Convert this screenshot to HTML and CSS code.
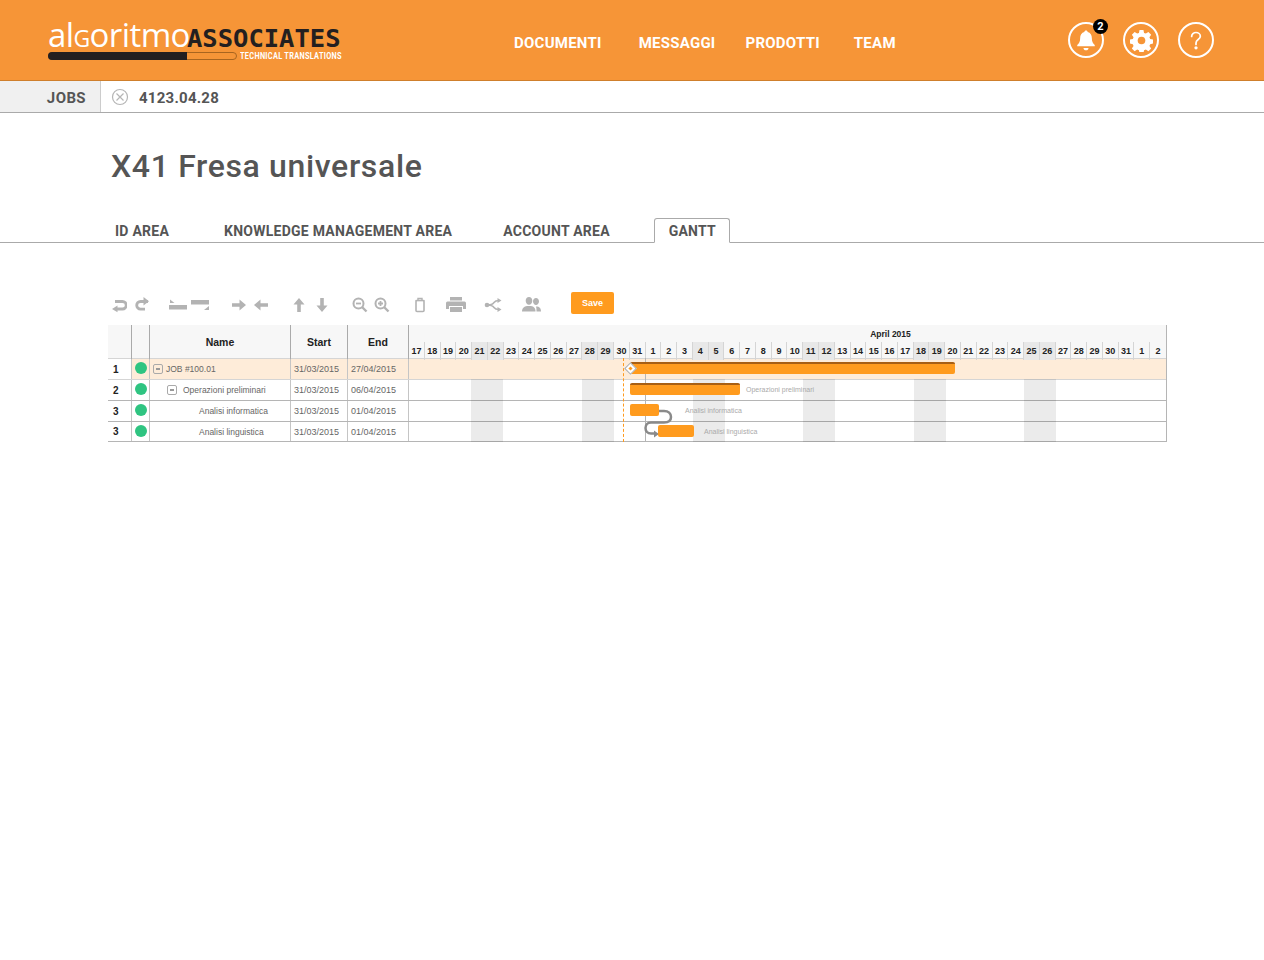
FILE: index.html
```html
<!DOCTYPE html>
<html>
	<head>
		<meta charset="UTF-8" />
		<title>X41 Fresa universale</title>
		<link rel="stylesheet" href="styles.css">
	</head>
	<body>
		<header class="topbar">
			<div class="logo">
				<div class="logo-words">
					<span class="logo-algo">al<span class="logo-g">g</span>oritmo</span><span class="logo-assoc">ASSOCIATES</span>
				</div>
				<div class="logo-under">
					<div class="logo-bar"><div class="logo-fill"></div></div>
					<span class="logo-sub">TECHNICAL TRANSLATIONS</span>
				</div>
			</div>
			<nav class="mainnav">
				<a class="nav-doc">DOCUMENTI</a>
				<a class="nav-msg">MESSAGGI</a>
				<a class="nav-prod">PRODOTTI</a>
				<a class="nav-team">TEAM</a>
			</nav>
			<div class="top-icons">
				<div class="round-icon">
					<svg width="20" height="23" viewBox="0 0 24 27"><path d="M12 1.500c1.200 0 2 .8 2 1.900 3.400.9 5 3.700 5 7.100 0 4.500 1.300 6.500 3.500 8.500v1.500h-21V19c2.200-2 3.500-4 3.500-8.500 0-3.400 1.600-6.200 5-7.100 0-1.100.8-1.900 2-1.900z" fill="#fff"/><path d="M9 22.500h6c0 1.600-1.300 2.800-3 2.800s-3-1.200-3-2.800z" fill="#fff"/></svg>
					<span class="badge">2</span>
				</div>
				<div class="round-icon">
					<svg width="23" height="23" viewBox="0 0 26 26"><path d="M10.800 1h4.400l.7 3.400 2 .8 2.900-1.900 3.100 3.100-1.900 2.900.8 2 3.400.7v4.400l-3.400.7-.8 2 1.900 2.900-3.100 3.100-2.900-1.900-2 .8-.7 3.400h-4.400l-.7-3.400-2-.8-2.900 1.900-3.100-3.100 1.900-2.900-.8-2-3.400-.7v-4.400l3.400-.7.8-2-1.900-2.900 3.100-3.100 2.900 1.900 2-.8z" fill="#fff"/><circle cx="13" cy="13" r="4.300" fill="#f69537"/></svg>
				</div>
				<div class="round-icon">
					<svg width="12" height="19" viewBox="0 0 18 28"><path d="M2.500 8c0-3.500 3-6 6.500-6s6.500 2.400 6.500 5.600c0 2.400-1.300 3.700-3.200 5-1.900 1.400-3.300 2.600-3.300 5v2.400" fill="none" stroke="#fff" stroke-width="2.600" stroke-linecap="round"/><circle cx="9" cy="25" r="2.500" fill="#fff"/></svg>
				</div>
			</div>
		</header>

		<div class="crumbs">
			<div class="crumb-head">JOBS</div>
			<svg class="crumb-x" width="18" height="18" viewBox="0 0 18 18"><circle cx="9" cy="9" r="7.500" fill="none" stroke="#b5b5b5" stroke-width="1.200"/><path d="M5.500 5.500l7 7M12.500 5.500l-7 7" stroke="#b5b5b5" stroke-width="1.200"/></svg>
			<div class="crumb-job">4123.04.28</div>
		</div>

		<h1 class="page-title">X41 Fresa universale</h1>

		<div class="tabs">
			<a class="tab tab-id">ID AREA</a>
			<a class="tab tab-km">KNOWLEDGE MANAGEMENT AREA</a>
			<a class="tab tab-acc">ACCOUNT AREA</a>
			<a class="tab tab-active">GANTT</a>
		</div>

		<div class="toolbar">
			<svg class="tool t-undo" width="16" height="16" viewBox="0 0 16 16"><path d="M3 3.500h7.500a3.500 3.500 0 0 1 0 7.500H5" fill="none" stroke="#b3b3b3" stroke-width="2.800" transform="translate(1 1)"/><path d="M6.500 8.500v6.800L1 12z" fill="#b3b3b3"/></svg>
			<svg class="tool t-redo" width="16" height="16" viewBox="0 0 16 16"><path d="M14 4.500H6.500a3.800 3.800 0 0 0 0 7.600H11" fill="none" stroke="#b3b3b3" stroke-width="2.800"/><path d="M9.500 0v8.500L15 4.300z" fill="#b3b3b3"/></svg>
			<svg class="tool t-out" width="20" height="14" viewBox="0 0 20 14"><rect x="1" y="7" width="18" height="4.500" fill="#b3b3b3"/><path d="M2 1.500l4.500 3.500H2z" fill="#b3b3b3"/></svg>
			<svg class="tool t-in" width="20" height="14" viewBox="0 0 20 14"><rect x="1" y="2" width="18" height="4.500" fill="#b3b3b3"/><path d="M14 12h5V8z" fill="#b3b3b3"/></svg>
			<svg class="tool t-right" width="16" height="14" viewBox="0 0 16 14"><path d="M1 5.200h7.500V1.500L15 7l-6.500 5.500V8.800H1z" fill="#b3b3b3"/></svg>
			<svg class="tool t-left" width="16" height="14" viewBox="0 0 16 14"><path d="M15 5.200H7.500V1.500L1 7l6.500 5.500V8.800H15z" fill="#b3b3b3"/></svg>
			<svg class="tool t-up" width="14" height="16" viewBox="0 0 14 16"><path d="M5.200 15V7.500H1.500L7 1l5.500 6.500H8.800V15z" fill="#b3b3b3"/></svg>
			<svg class="tool t-down" width="14" height="16" viewBox="0 0 14 16"><path d="M5.200 1v7.500H1.500L7 15l5.500-6.500H8.800V1z" fill="#b3b3b3"/></svg>
			<svg class="tool t-zout" width="16" height="16" viewBox="0 0 16 16"><circle cx="6.500" cy="6.500" r="5" fill="none" stroke="#b3b3b3" stroke-width="2"/><path d="M4 6.500h5" stroke="#b3b3b3" stroke-width="1.800"/><path d="M10 10l4.500 4.500" stroke="#b3b3b3" stroke-width="2.400"/></svg>
			<svg class="tool t-zin" width="16" height="16" viewBox="0 0 16 16"><circle cx="6.500" cy="6.500" r="5" fill="none" stroke="#b3b3b3" stroke-width="2"/><path d="M4 6.500h5M6.500 4v5" stroke="#b3b3b3" stroke-width="1.800"/><path d="M10 10l4.500 4.500" stroke="#b3b3b3" stroke-width="2.400"/></svg>
			<svg class="tool t-trash" width="12" height="16" viewBox="0 0 12 16"><rect x="2" y="3.500" width="8" height="11" rx="1" fill="none" stroke="#b3b3b3" stroke-width="1.600"/><path d="M4 4V1.500h4V4" fill="none" stroke="#b3b3b3" stroke-width="1.400"/><path d="M1.500 3.500h9" stroke="#b3b3b3" stroke-width="1.200"/></svg>
			<svg class="tool t-print" width="20" height="16" viewBox="0 0 20 16"><path d="M4 0h12v3.500H4z" fill="#b3b3b3"/><path d="M1.500 4.500h17a1.500 1.500 0 0 1 1.500 1.500v6h-3V9H3v3H0V6a1.500 1.500 0 0 1 1.500-1.500z" fill="#b3b3b3"/><path d="M4 10h12v5H4z" fill="#b3b3b3"/></svg>
			<svg class="tool t-link" width="18" height="14" viewBox="0 0 18 14"><path d="M3 7c4 0 6-1 7-2.500S12 2.500 15 2.500M3 7c4 0 6 1 7 2.500s2 2 5 2" fill="none" stroke="#b3b3b3" stroke-width="1.500"/><circle cx="3" cy="7" r="2.300" fill="#b3b3b3"/><path d="M13.500 0l4 2.500-4 2.500zM13.500 9l4 2.500-4 2.500z" fill="#b3b3b3"/></svg>
			<svg class="tool t-people" width="19" height="15" viewBox="0 0 19 15"><path d="M7 0c2 0 3.300 1.500 3.300 3.800S9 7.800 7 7.800 3.700 6.100 3.700 3.800 5 0 7 0zM14 1c1.700 0 3 1.400 3 3.300S15.700 8 14 8s-3-1.800-3-3.700S12.300 1 14 1z" fill="#b3b3b3"/><path d="M0 14.500c0-3.500 2-5.500 7-5.500s6.500 2 6.500 5.500z" fill="#b3b3b3"/><path d="M14.500 14.500h4.500c0-3-1.200-5-5-5 .5 1.500.5 3.500.5 5z" fill="#b3b3b3"/></svg>
			<button class="save-btn" type="button">Save</button>
		</div>

		<div class="gantt">
			<div class="gantt-head">
				<div class="hcell"></div>
				<div class="hcell"></div>
				<div class="hcell hname">Name</div>
				<div class="hcell hname">Start</div>
				<div class="hcell hname">End</div>
				<div class="hcal">
					<div class="hmonth">April 2015</div>
					<div class="hdays">
						<span>17</span><span>18</span><span>19</span><span>20</span><span class="we">21</span><span class="we">22</span><span>23</span><span>24</span><span>25</span><span>26</span><span>27</span><span class="we">28</span><span class="we">29</span><span>30</span><span>31</span><span>1</span><span>2</span><span>3</span><span class="we">4</span><span class="we">5</span><span>6</span><span>7</span><span>8</span><span>9</span><span>10</span><span class="we">11</span><span class="we">12</span><span>13</span><span>14</span><span>15</span><span>16</span><span>17</span><span class="we">18</span><span class="we">19</span><span>20</span><span>21</span><span>22</span><span>23</span><span>24</span><span class="we">25</span><span class="we">26</span><span>27</span><span>28</span><span>29</span><span>30</span><span>31</span><span>1</span><span>2</span>
					</div>
				</div>
			</div>

			<div class="grow grow-job">
				<div class="cell cell-num">1</div>
				<div class="cell cell-dot"><i class="dot"></i></div>
				<div class="cell cell-name lvl0"><i class="minus"></i>JOB #100.01</div>
				<div class="cell cell-date">31/03/2015</div>
				<div class="cell cell-date">27/04/2015</div>
				<div class="cell"></div>
			</div>
			<div class="grow">
				<div class="cell cell-num">2</div>
				<div class="cell cell-dot"><i class="dot"></i></div>
				<div class="cell cell-name lvl1"><i class="minus"></i>Operazioni preliminari</div>
				<div class="cell cell-date">31/03/2015</div>
				<div class="cell cell-date">06/04/2015</div>
				<div class="cell"></div>
			</div>
			<div class="grow">
				<div class="cell cell-num">3</div>
				<div class="cell cell-dot"><i class="dot"></i></div>
				<div class="cell cell-name lvl2">Analisi informatica</div>
				<div class="cell cell-date">31/03/2015</div>
				<div class="cell cell-date">01/04/2015</div>
				<div class="cell"></div>
			</div>
			<div class="grow grow-last">
				<div class="cell cell-num">3</div>
				<div class="cell cell-dot"><i class="dot"></i></div>
				<div class="cell cell-name lvl2">Analisi linguistica</div>
				<div class="cell cell-date">31/03/2015</div>
				<div class="cell cell-date">01/04/2015</div>
				<div class="cell"></div>
			</div>

			<div class="chart">
				<div class="stripe s1"></div>
				<div class="stripe s2"></div>
				<div class="stripe s3"></div>
				<div class="stripe s4"></div>
				<div class="stripe s5"></div>
				<div class="stripe s6"></div>
				<div class="vline"></div>
				<div class="dashline"></div>
				<div class="bar bar-job summary"></div>
				<div class="diamond"></div>
				<div class="bar bar-ops summary"></div>
				<span class="bar-label lab-ops">Operazioni preliminari</span>
				<span class="bar-label lab-info">Analisi informatica</span>
				<span class="bar-label lab-ling">Analisi linguistica</span>
				<svg class="connector" width="40" height="40" viewBox="0 0 40 40"><path d="M14 4h6c4.500 0 7 2.500 7 6s-2.500 5.500-7 5.500H7c-3.500 0-5.500 2.500-5.500 5.500s2 5.500 5.500 5.500h5" fill="none" stroke="#8a8a8a" stroke-width="2.500"/><path d="M10 23.500l5 3.500-5 3.500z" fill="#8a8a8a"/></svg>
				<div class="bar bar-info"></div>
				<div class="bar bar-ling"></div>
			</div>
		</div>
	</body>
</html>
```

FILE: styles.css
```css
body {
	margin: 0;
	background: #fff;
	font-family: Roboto, "Liberation Sans", sans-serif;
	color: #555;
}

/* top bar */
.topbar {
	display: flex;
	align-items: center;
	height: 80px;
	background-color: #f69537;
	border-bottom: 1px solid #cf7f2c;
	position: relative;
}
.logo {
	margin-left: 48px;
	width: 294px;
	flex: none;
}
.logo-words {
	display: flex;
	align-items: flex-end;
	height: 28px;
	margin-top: 1px;
}
.logo-algo {
	font-family: "Open Sans", sans-serif;
	font-weight: 400;
	font-size: 33px;
	line-height: 28px;
	color: #fff;
	width: 139px;
	letter-spacing: -0.6px;
	flex: none;
}
.logo-g {
	font-variant: small-caps;
}
.logo-assoc {
	font-family: "DejaVu Sans Mono", monospace;
	font-weight: 700;
	font-size: 25.5px;
	line-height: 22px;
	color: #231f20;
}
.logo-under {
	display: flex;
	align-items: center;
	margin-top: 2px;
}
.logo-bar {
	box-sizing: border-box;
	flex: none;
	width: 189px;
	height: 8px;
	border: 1px solid #a8651f;
	border-radius: 4px;
}
.logo-fill {
	width: 139px;
	height: 8px;
	margin: -1px;
	background: #231f20;
	border-radius: 4px 0 0 4px;
}
.logo-sub {
	margin-left: 3px;
	margin-top: -1px;
	font-size: 9.8px;
	font-weight: 700;
	letter-spacing: 0.4px;
	color: #fff;
	white-space: nowrap;
	transform: scaleX(0.75);
	transform-origin: left center;
}
.mainnav {
	display: flex;
	margin-left: 172px;
	margin-top: 5px;
	font-size: 15px;
	font-weight: 700;
	letter-spacing: 0.25px;
	color: #fff;
}
.nav-msg {
	margin-left: 37px;
}
.nav-prod {
	margin-left: 30px;
}
.nav-team {
	margin-left: 34px;
}
.top-icons {
	display: flex;
	gap: 19px;
	margin-left: auto;
	margin-right: 50px;
}
.round-icon {
	box-sizing: border-box;
	width: 36px;
	height: 36px;
	border: 2px solid #fff;
	border-radius: 50%;
	display: flex;
	align-items: center;
	justify-content: center;
	position: relative;
}
.badge {
	position: absolute;
	top: -5px;
	right: -6px;
	width: 15px;
	height: 15px;
	border-radius: 50%;
	background: #000;
	color: #fff;
	font-size: 11px;
	font-weight: 700;
	line-height: 15px;
	text-align: center;
}

/* breadcrumb strip */
.crumbs {
	display: flex;
	align-items: center;
	height: 31px;
	border-bottom: 1px solid #aaa;
}
.crumb-head {
	box-sizing: border-box;
	width: 101px;
	height: 31px;
	line-height: 34px;
	padding-right: 14px;
	text-align: right;
	background: #f0f0f0;
	border-right: 1px solid #ccc;
	font-size: 15px;
	font-weight: 700;
	letter-spacing: 0.4px;
}
.crumb-x {
	margin-left: 10px;
}
.crumb-job {
	margin-left: 10px;
	margin-top: 2px;
	font-size: 15px;
	font-weight: 700;
	letter-spacing: 0.25px;
}

/* title and tabs */
.page-title {
	margin: 34px 0 0 111px;
	font-size: 32px;
	line-height: 38px;
	font-weight: 500;
	letter-spacing: 0.65px;
}
.tabs {
	display: flex;
	align-items: flex-end;
	height: 24px;
	margin-top: 33px;
	border-bottom: 1px solid #aaa;
	font-size: 14px;
	font-weight: 700;
	letter-spacing: 0.25px;
}
.tab {
	line-height: 22px;
	white-space: nowrap;
}
.tab-id {
	margin-left: 115px;
}
.tab-km {
	margin-left: 55px;
}
.tab-acc {
	margin-left: 51px;
}
.tab-active {
	box-sizing: border-box;
	width: 76px;
	height: 25px;
	margin-left: 44px;
	margin-bottom: -1px;
	padding-left: 1px;
	line-height: 24px;
	text-align: center;
	background: #fff;
	border: 1px solid #aaa;
	border-bottom: 1px solid #fff;
	border-radius: 3px 3px 0 0;
}

/* gantt toolbar */
.toolbar {
	display: flex;
	align-items: center;
	height: 22px;
	margin: 49px 0 0 111px;
}
.tool {
	flex: none;
	margin-top: 3px;
}
.t-undo { margin-left: 0; }
.t-redo { margin-left: 7px; }
.t-out { margin-left: 18px; }
.t-in { margin-left: 2px; }
.t-right { margin-left: 21px; }
.t-left { margin-left: 6px; }
.t-up { margin-left: 23px; }
.t-down { margin-left: 9px; }
.t-zout { margin-left: 23px; }
.t-zin { margin-left: 6px; }
.t-trash { margin-left: 24px; }
.t-print { margin-left: 20px; }
.t-link { margin-left: 18px; }
.t-people { margin-left: 20px; }
.save-btn {
	width: 43px;
	height: 22px;
	margin-left: 30px;
	padding: 0;
	border: none;
	border-radius: 2px;
	background-color: #ff9b1e;
	color: #fff;
	font-family: "Liberation Sans", sans-serif;
	font-size: 9px;
	font-weight: 700;
}

/* gantt */
.gantt {
	position: relative;
	box-sizing: border-box;
	width: 1059px;
	margin: 11px 0 0 108px;
	font-family: "Liberation Sans", sans-serif;
	border-right: 1px solid #b5b5b5;
}
.gantt-head {
	display: grid;
	grid-template-columns: 24px 18px 141px 57px 61px 1fr;
	height: 34px;
	box-sizing: border-box;
	background: #f7f7f7;
	border-bottom: 1px solid #d5d5d5;
}
.hcell {
	border-right: 1px solid #aaa;
}
.hname {
	font-size: 10.5px;
	font-weight: 700;
	line-height: 35px;
	text-align: center;
	color: #222;
}
.hcal {
	display: flex;
	flex-direction: column;
	min-width: 0;
}
.hmonth {
	height: 17px;
	font-size: 8.5px;
	font-weight: 700;
	line-height: 18px;
	text-align: center;
	color: #222;
	padding-left: 206px;
}
.hdays {
	display: grid;
	grid-template-columns: repeat(48, 1fr);
	height: 16px;
}
.hdays span {
	font-size: 9px;
	font-weight: 700;
	line-height: 18px;
	text-align: center;
	color: #222;
	border-right: 1px solid #d5d5d5;
	min-width: 0;
}
.hdays span.we {
	background: #e8e8e8;
}
.hdays span:last-child {
	border-right: none;
}
.grow {
	display: grid;
	grid-template-columns: 24px 18px 141px 57px 61px 1fr;
	height: 21px;
	box-sizing: border-box;
	border-bottom: 1px solid #b5b5b5;
}
.grow-job {
	background: #feecd9;
	border-bottom-color: #d5d5d5;
}
.grow-last {
	height: 20px;
}
.cell {
	display: flex;
	align-items: center;
	border-right: 1px solid #c5c5c5;
	font-size: 8.5px;
	color: #666;
	min-width: 0;
	white-space: nowrap;
}
.cell:last-child {
	border-right: none;
}
.cell-num {
	padding-left: 5px;
	font-size: 10px;
	font-weight: 700;
	color: #222;
	background: #fff;
}
.cell-dot {
	justify-content: center;
}
.dot {
	width: 12px;
	height: 12px;
	border-radius: 50%;
	background: #2fc481;
	margin-top: -2px;
}
.cell-date {
	padding-left: 3px;
	font-size: 9px;
}
.minus {
	box-sizing: border-box;
	display: inline-block;
	position: relative;
	width: 10px;
	height: 10px;
	border: 1px solid #aaa;
	border-radius: 2px;
	margin-right: 3px;
}
.minus::after {
	content: "";
	position: absolute;
	left: 2px;
	right: 2px;
	top: 3px;
	height: 2px;
	background: #999;
}
.lvl0 {
	padding-left: 3px;
}
.lvl1 {
	padding-left: 17px;
}
.lvl1 .minus {
	margin-right: 6px;
}
.lvl2 {
	padding-left: 49px;
}

/* things drawn on the time line */
.chart {
	position: absolute;
	left: 300px;
	top: 33px;
	right: 0;
	bottom: 0;
}
.stripe {
	position: absolute;
	top: 21px;
	bottom: 0;
	width: 32px;
	background: rgba(0, 0, 0, 0.08);
}
.s1 { left: 63px; }
.s2 { left: 174px; }
.s3 { left: 285px; }
.s4 { left: 395px; }
.s5 { left: 506px; }
.s6 { left: 616px; }
.vline {
	position: absolute;
	left: 237px;
	top: 0;
	bottom: 0;
	width: 1px;
	background: #b5b5b5;
}
.dashline {
	position: absolute;
	left: 215px;
	top: 0;
	bottom: 0;
	border-left: 1px dashed #ff9b1e;
}
.bar {
	position: absolute;
	height: 12px;
	box-sizing: border-box;
	background: #ff9b1e;
	border-radius: 2px;
}
.summary {
	border-top: 2px solid #a85f14;
}
.bar-job {
	left: 222px;
	top: 4px;
	width: 325px;
}
.bar-ops {
	left: 222px;
	top: 25px;
	width: 110px;
}
.bar-info {
	left: 222px;
	top: 46px;
	width: 29px;
}
.bar-ling {
	left: 250px;
	top: 67px;
	width: 36px;
}
.diamond {
	position: absolute;
	left: 218px;
	top: 6px;
	width: 7px;
	height: 7px;
	background: #fff;
	border: 1px solid #aaa;
	transform: rotate(45deg);
}
.diamond::after {
	content: "";
	position: absolute;
	left: 2px;
	top: 2px;
	width: 3px;
	height: 3px;
	background: #ff9b1e;
}
.bar-label {
	position: absolute;
	font-size: 7px;
	line-height: 10px;
	color: #aaa;
	white-space: nowrap;
}
.lab-ops {
	left: 338px;
	top: 27px;
}
.lab-info {
	left: 277px;
	top: 48px;
}
.lab-ling {
	left: 296px;
	top: 69px;
}
.connector {
	position: absolute;
	left: 236px;
	top: 49px;
	overflow: visible;
}
```
